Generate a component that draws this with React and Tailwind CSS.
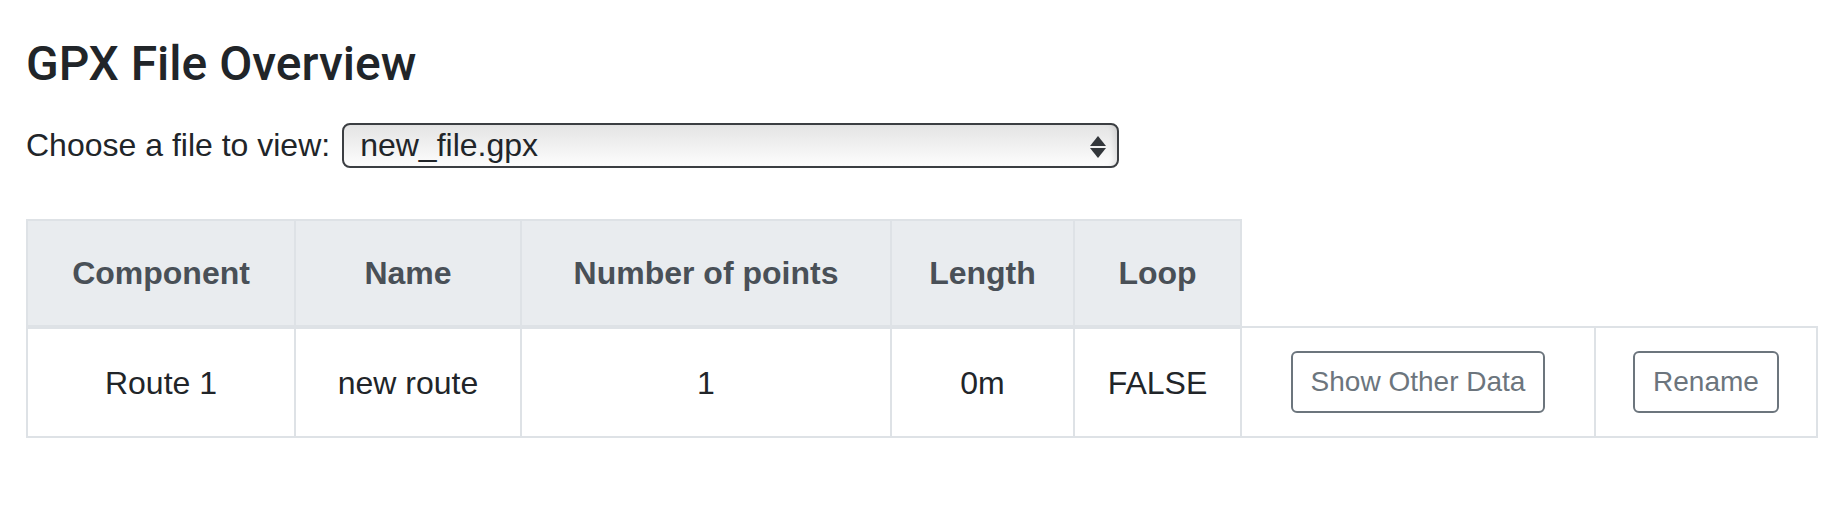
import React, { useState } from "react";

const files = ["new_file.gpx"];

const headers = ["Component", "Name", "Number of points", "Length", "Loop"];

const rows = [
  { component: "Route 1", name: "new route", points: 1, length: "0m", loop: "FALSE" },
];

const App = () => {
  const [selected, setSelected] = useState(files[0]);

  return (
    <div className="min-h-screen bg-white px-[26px] pt-[36px] font-['Liberation_Sans',Arial,sans-serif] text-[#212529]">
      <h1 className="font-['Roboto',sans-serif] text-[48px] font-medium leading-[55px] mb-[30px]">
        GPX File Overview
      </h1>

      <div className="flex items-center">
        <label htmlFor="file-select" className="text-[32px] leading-[48px]">
          Choose a file to view:
        </label>
        <div className="relative ml-[12px] w-[777px] h-[45px]">
          <select
            id="file-select"
            value={selected}
            onChange={(e) => setSelected(e.target.value)}
            className="appearance-none w-full h-full border-2 border-[#3b3e42] rounded-[8px] bg-gradient-to-b from-[#e4e4e4] to-[#fdfdfd] pl-[16px] text-[32px] leading-[41px] text-[#212529] outline-none shadow-[inset_-6px_0_6px_-4px_rgba(0,0,0,0.12)]"
          >
            {files.map((f) => (
              <option key={f} value={f}>
                {f}
              </option>
            ))}
          </select>
          {/* up / down arrows of the native select */}
          <svg
            className="absolute right-[13px] top-[13px] pointer-events-none"
            width="16"
            height="22"
            viewBox="0 0 16 22"
          >
            <polygon points="8,0 16,10 0,10" fill="#33373b" />
            <polygon points="0,12 16,12 8,22" fill="#33373b" />
          </svg>
        </div>
      </div>

      <table className="mt-[50px] table-fixed border-collapse w-[1790px] text-center">
        <colgroup>
          <col className="w-[268px]" />
          <col className="w-[226px]" />
          <col className="w-[370px]" />
          <col className="w-[183px]" />
          <col className="w-[167px]" />
          <col className="w-[354px]" />
          <col className="w-[222px]" />
        </colgroup>
        <thead>
          <tr>
            {headers.map((h) => (
              <th
                key={h}
                className="bg-[#e9ecef] text-[#495057] font-bold text-[32px] leading-[48px] h-[107px] border-2 border-b-4 border-[#dee2e6] align-middle"
              >
                {h}
              </th>
            ))}
          </tr>
        </thead>
        <tbody>
          {rows.map((r) => (
            <tr key={r.component}>
              <td className="border-2 border-[#dee2e6] text-[32px] leading-[48px] h-[110px] align-middle">
                {r.component}
              </td>
              <td className="border-2 border-[#dee2e6] text-[32px] leading-[48px] align-middle">
                {r.name}
              </td>
              <td className="border-2 border-[#dee2e6] text-[32px] leading-[48px] align-middle">
                {r.points}
              </td>
              <td className="border-2 border-[#dee2e6] text-[32px] leading-[48px] align-middle">
                {r.length}
              </td>
              <td className="border-2 border-[#dee2e6] text-[32px] leading-[48px] align-middle">
                {r.loop}
              </td>
              <td className="border-2 border-[#dee2e6] align-middle">
                <button
                  type="button"
                  className="border-2 border-[#6c757d] text-[#6c757d] rounded-[6px] px-[18px] py-[8px] text-[28px] leading-[42px]"
                >
                  Show Other Data
                </button>
              </td>
              <td className="border-2 border-[#dee2e6] align-middle">
                <button
                  type="button"
                  className="border-2 border-[#6c757d] text-[#6c757d] rounded-[6px] px-[18px] py-[8px] text-[28px] leading-[42px]"
                >
                  Rename
                </button>
              </td>
            </tr>
          ))}
        </tbody>
      </table>
    </div>
  );
};

export default App;
